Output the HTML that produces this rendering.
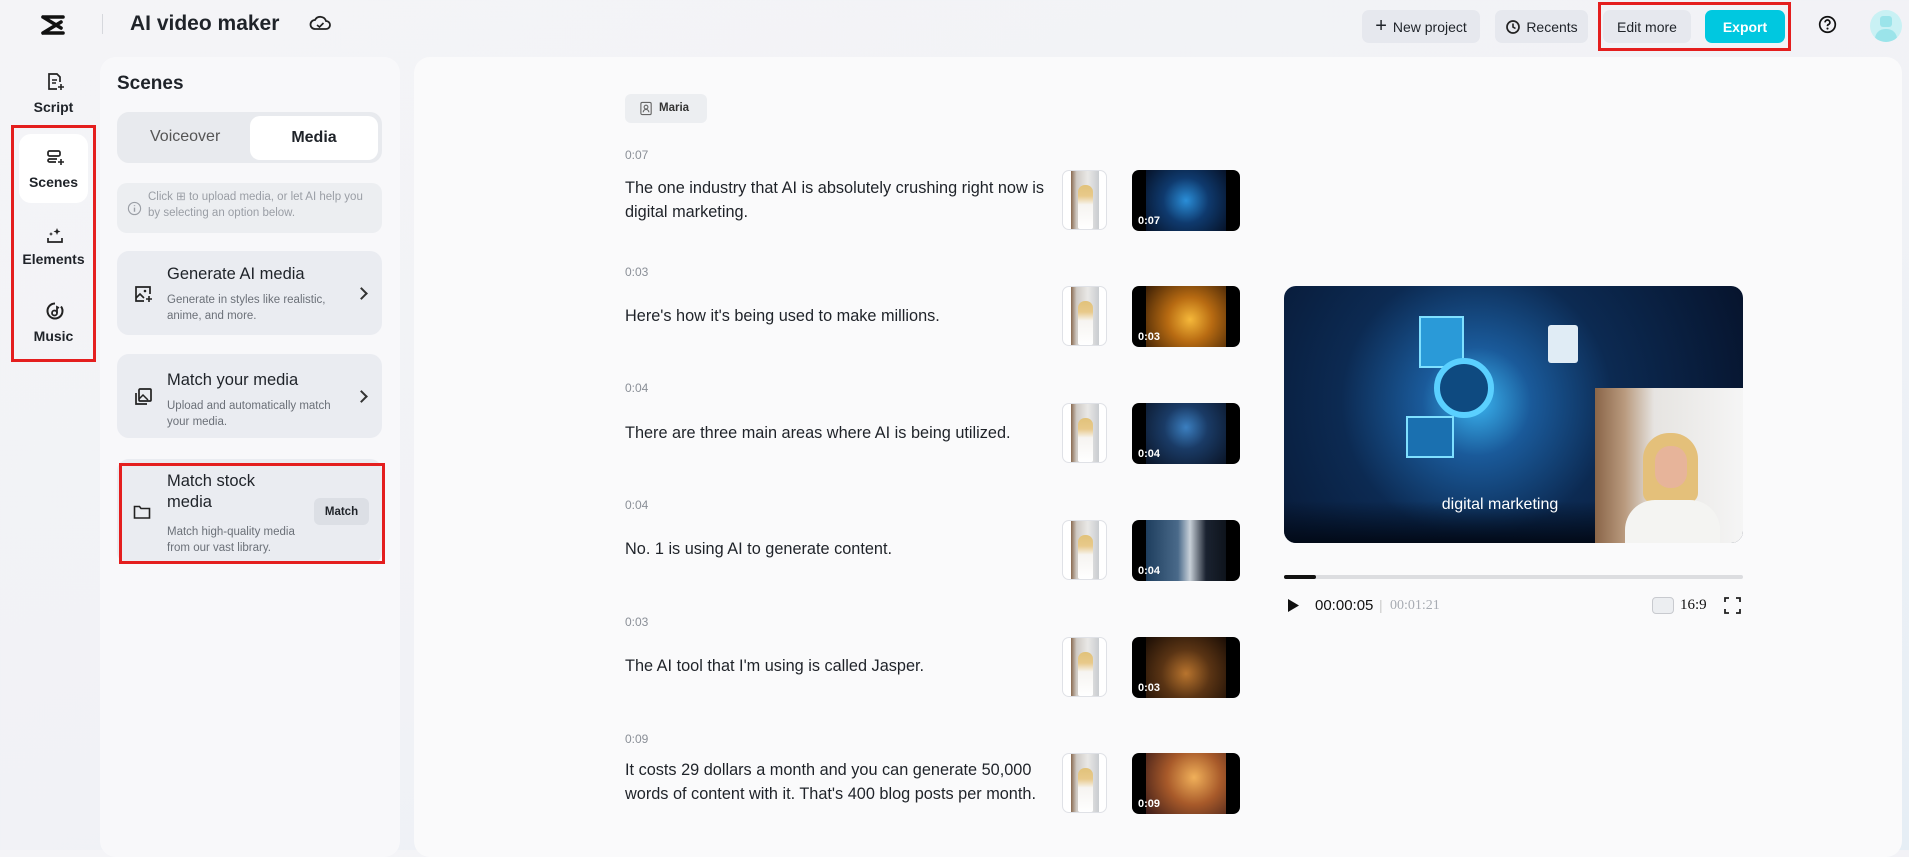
<!DOCTYPE html>
<html><head><meta charset="utf-8"><style>
*{box-sizing:border-box;margin:0;padding:0}
body{width:1909px;height:850px;overflow:hidden;font-family:"Liberation Sans",sans-serif;color:#1f2329;background:linear-gradient(160deg,#f4f4f7 0%,#f1f2f6 55%,#e6eef5 100%);position:relative}
.a{position:absolute}
.btn{position:absolute;top:10px;height:33px;border-radius:7px;background:#e6e8ee;font-size:14px;display:flex;align-items:center;justify-content:center;color:#1f2329}
.rail{position:absolute;left:19px;width:69px;text-align:center;font-size:14px;font-weight:bold}
.card{position:absolute;left:117px;width:265px;background:#eaecf1;border-radius:12px}
.card .t{position:absolute;left:50px;font-size:16.5px;color:#1f2329}
.card .d{position:absolute;left:50px;font-size:11.5px;color:#6b7078;line-height:16px}
.chev{position:absolute;right:16px;width:9px;height:9px;border-right:2px solid #333;border-top:2px solid #333;transform:rotate(45deg)}
.lbl{position:absolute;left:625px;font-size:12px;color:#8a8f97}
.txt{position:absolute;left:625px;font-size:16.3px;line-height:24px;color:#1f2329;width:440px}
.av{position:absolute;left:1062px;width:45px;height:60px;border:1px solid #dfe1e6;border-radius:7px;background:#fff;overflow:hidden}
.av i{position:absolute;left:8px;top:0;width:28px;height:58px;background:linear-gradient(90deg,#8a6a50 0,#cfcac4 20%,#e9e8e6 60%,#c9ccd0 100%)}
.av b{position:absolute;left:15px;top:14px;width:15px;height:44px;border-radius:7px 7px 2px 2px;background:linear-gradient(#e1c27a 0,#e8c98a 25%,#f6f4f1 45%,#fff 100%)}
.vt{position:absolute;left:1132px;width:108px;height:61px;border-radius:7px;background:#000;overflow:hidden}
.vt i{position:absolute;left:14px;top:0;width:80px;height:61px}
.vt span{position:absolute;left:6px;bottom:4px;color:#fff;font-size:11px;font-weight:bold}
</style></head><body>
<!-- header -->
<svg class="a" style="left:39px;top:14px" width="28" height="22" viewBox="0 0 28 22"><path d="M4 3h20M4 19h20M4 3L22 14M4 19L22 8" stroke="#111" stroke-width="3.6" fill="none" stroke-linecap="round"/></svg>
<div class="a" style="left:102px;top:14px;width:1px;height:20px;background:#d6d8dd"></div>
<div class="a" style="left:130px;top:12px;font-size:21px;font-weight:bold">AI video maker</div>
<svg class="a" style="left:309px;top:14px" width="22" height="18" viewBox="0 0 22 18"><path d="M6 15h11a4 4 0 0 0 0-8 6 6 0 0 0-11-1 4.5 4.5 0 0 0 0 9z" fill="none" stroke="#222" stroke-width="1.8"/><path d="M8 11l2.5 2 4-4" fill="none" stroke="#222" stroke-width="1.6"/></svg>
<div class="btn" style="left:1362px;width:118px"><span style="font-size:20px;margin-right:6px;font-weight:300">+</span>New project</div>
<div class="btn" style="left:1495px;width:93px"><svg width="16" height="16" viewBox="0 0 16 16" style="margin-right:5px"><circle cx="8" cy="8" r="6" fill="none" stroke="#222" stroke-width="1.7"/><path d="M8 4.5V8l2.5 1.5" stroke="#222" stroke-width="1.6" fill="none"/></svg>Recents</div>
<div class="a" style="left:1598px;top:2px;width:193px;height:49px;border:3px solid #e41e1e"></div>
<div class="btn" style="left:1603px;width:88px">Edit more</div>
<div class="btn" style="left:1705px;width:80px;background:#00c8e0;color:#fff;font-weight:bold">Export</div>
<svg class="a" style="left:1818px;top:15px" width="19" height="19" viewBox="0 0 20 20"><circle cx="10" cy="10" r="8.2" fill="none" stroke="#111" stroke-width="1.8"/><path d="M7.5 7.8a2.5 2.5 0 1 1 3.4 2.3c-.7.3-.9.8-.9 1.6" fill="none" stroke="#111" stroke-width="1.8"/><circle cx="10" cy="14.3" r="1.1" fill="#111"/></svg>
<div class="a" style="left:1870px;top:10px;width:32px;height:32px;border-radius:50%;background:#c9f1f4;overflow:hidden"><div class="a" style="left:10px;top:6px;width:12px;height:11px;border-radius:3px;background:#9be4ea"></div><div class="a" style="left:5px;top:19px;width:22px;height:16px;border-radius:10px 10px 0 0;background:#9be4ea"></div></div>
<!-- rail -->
<svg class="a" style="left:45px;top:72px" width="20" height="20" viewBox="0 0 20 20"><path d="M12 17H4V2h8l3 3v5" fill="none" stroke="#222" stroke-width="1.7"/><path d="M7 8h5M7 11h4" stroke="#222" stroke-width="1.6"/><path d="M16 12v6M13 15h6" stroke="#222" stroke-width="1.6"/></svg>
<div class="rail" style="top:99px">Script</div>
<div class="a" style="left:11px;top:125px;width:85px;height:237px;border:3px solid #e41e1e"></div>
<div class="a" style="left:19px;top:134px;width:69px;height:69px;background:#fff;border-radius:12px"></div>
<svg class="a" style="left:45px;top:148px" width="20" height="20" viewBox="0 0 20 20"><rect x="3" y="3" width="12" height="5" rx="1.5" fill="none" stroke="#222" stroke-width="1.7"/><path d="M11 14H4.5A1.5 1.5 0 0 1 3 12.5v0A1.5 1.5 0 0 1 4.5 11H12" fill="none" stroke="#222" stroke-width="1.7"/><path d="M16 11v6M13 14h6" stroke="#222" stroke-width="1.6"/></svg>
<div class="rail" style="top:174px">Scenes</div>
<svg class="a" style="left:45px;top:226px" width="20" height="20" viewBox="0 0 20 20"><path d="M3 12v4h14v-4" fill="none" stroke="#222" stroke-width="1.7"/><path d="M12 2l1 2.5 2.5 1-2.5 1-1 2.5-1-2.5L8.5 5.5 11 4.5zM6 6l.6 1.4L8 8l-1.4.6L6 10l-.6-1.4L4 8l1.4-.6z" fill="#222"/></svg>
<div class="rail" style="top:251px">Elements</div>
<svg class="a" style="left:45px;top:301px" width="20" height="20" viewBox="0 0 20 20"><path d="M10 2.5a7.5 7.5 0 1 0 6 3" fill="none" stroke="#222" stroke-width="2"/><circle cx="9.5" cy="12" r="2.5" fill="none" stroke="#222" stroke-width="1.8"/><path d="M12 12V6l2 1" fill="none" stroke="#222" stroke-width="1.8"/></svg>
<div class="rail" style="top:328px">Music</div>
<!-- left panel -->
<div class="a" style="left:100px;top:57px;width:300px;height:800px;background:#f8f8fa;border-radius:16px"></div>
<div class="a" style="left:117px;top:73px;font-size:19px;font-weight:bold;color:#1f2329">Scenes</div>
<div class="a" style="left:117px;top:112px;width:265px;height:51px;background:#e8eaee;border-radius:12px"></div>
<div class="a" style="left:150px;top:128px;font-size:16px;color:#555">Voiceover</div>
<div class="a" style="left:250px;top:116px;width:128px;height:44px;background:#fff;border-radius:10px;font-size:16px;font-weight:bold;display:flex;align-items:center;justify-content:center">Media</div>
<div class="a" style="left:117px;top:183px;width:265px;height:50px;background:#eceef1;border-radius:10px"></div>
<svg class="a" style="left:127px;top:201px" width="15" height="15" viewBox="0 0 16 16"><circle cx="8" cy="8" r="6.5" fill="none" stroke="#9a9ea5" stroke-width="1.2"/><path d="M8 7v4.5M8 4.5v1" stroke="#9a9ea5" stroke-width="1.5"/></svg>
<div class="a" style="left:148px;top:189px;font-size:11.5px;line-height:16px;color:#9a9ea5;width:230px">Click ⊞ to upload media, or let AI help you by selecting an option below.</div>
<div class="card" style="top:251px;height:84px"><svg class="a" style="left:16px;top:33px" width="20" height="20" viewBox="0 0 20 20"><path d="M11 17H3V3h14v7" fill="none" stroke="#222" stroke-width="1.7"/><path d="M3 14l4-4 4 4" fill="none" stroke="#222" stroke-width="1.6"/><circle cx="12" cy="7" r="1.3" fill="#222"/><path d="M16 12v6M13 15h6" stroke="#222" stroke-width="1.6"/></svg><div class="t" style="top:14px">Generate AI media</div><div class="d" style="top:41px">Generate in styles like realistic,<br>anime, and more.</div><div class="chev" style="top:38px"></div></div>
<div class="card" style="top:354px;height:84px"><svg class="a" style="left:16px;top:33px" width="20" height="20" viewBox="0 0 20 20"><rect x="6" y="2" width="12" height="12" rx="1" fill="none" stroke="#222" stroke-width="1.7"/><path d="M3 6v11h11" fill="none" stroke="#222" stroke-width="1.7"/><path d="M6 12l4-4 5 5" fill="none" stroke="#222" stroke-width="1.5"/></svg><div class="t" style="top:17px">Match your media</div><div class="d" style="top:44px">Upload and automatically match<br>your media.</div><div class="chev" style="top:38px"></div></div>
<div class="card" style="top:459px;height:105px"><svg class="a" style="left:16px;top:45px" width="18" height="16" viewBox="0 0 18 16"><path d="M1.5 2.5h5l1.5 2h8.5v9.5h-15z" fill="none" stroke="#222" stroke-width="1.6"/></svg><div class="t" style="top:12px;line-height:21px">Match stock<br>media</div><div class="d" style="top:65px">Match high-quality media<br>from our vast library.</div><div class="a" style="left:197px;top:39px;width:55px;height:27px;background:#dcdfe5;border-radius:6px;font-size:11.5px;font-weight:bold;display:flex;align-items:center;justify-content:center">Match</div></div>
<div class="a" style="left:119px;top:463px;width:266px;height:101px;border:3px solid #e41e1e"></div>
<!-- main -->
<div class="a" style="left:414px;top:57px;width:1488px;height:800px;background:#fafafb;border-radius:16px"></div>
<div class="a" style="left:625px;top:94px;width:82px;height:29px;background:#eceef1;border-radius:6px"></div>
<svg class="a" style="left:639px;top:101px" width="15" height="15" viewBox="0 0 16 16"><rect x="2" y="1.5" width="11" height="13" rx="1.5" fill="none" stroke="#666" stroke-width="1.2"/><circle cx="7.5" cy="6.5" r="2" fill="none" stroke="#666" stroke-width="1.2"/><path d="M4.5 12a3 3 0 0 1 6 0" fill="none" stroke="#666" stroke-width="1.2"/></svg>
<div class="a" style="left:659px;top:102px;font-size:11.5px;font-weight:bold;color:#333">Maria</div>

<div class="lbl" style="top:148px">0:07</div>
<div class="txt" style="top:176px">The one industry that AI is absolutely crushing right now is digital marketing.</div>
<div class="av" style="top:170px"><i></i><b></b></div>
<div class="vt" style="top:170px"><i style="background:radial-gradient(circle at 50% 50%,#2a8ed8 0,#0f3a6e 45%,#061228 100%)"></i><span>0:07</span></div>

<div class="lbl" style="top:265px">0:03</div>
<div class="txt" style="top:304px">Here's how it's being used to make millions.</div>
<div class="av" style="top:286px"><i></i><b></b></div>
<div class="vt" style="top:286px"><i style="background:radial-gradient(circle at 55% 55%,#f5b83a 0,#b86b12 40%,#3a1e05 100%)"></i><span>0:03</span></div>

<div class="lbl" style="top:381px">0:04</div>
<div class="txt" style="top:421px">There are three main areas where AI is being utilized.</div>
<div class="av" style="top:403px"><i></i><b></b></div>
<div class="vt" style="top:403px"><i style="background:radial-gradient(circle at 50% 40%,#3b7fc0 0,#1a3b66 40%,#0a1426 100%)"></i><span>0:04</span></div>

<div class="lbl" style="top:498px">0:04</div>
<div class="txt" style="top:537px">No. 1 is using AI to generate content.</div>
<div class="av" style="top:520px"><i></i><b></b></div>
<div class="vt" style="top:520px"><i style="background:linear-gradient(90deg,#1e3e5e 0,#4a6a8a 40%,#c8d0d8 55%,#1a2230 75%,#0e141c 100%)"></i><span>0:04</span></div>

<div class="lbl" style="top:615px">0:03</div>
<div class="txt" style="top:654px">The AI tool that I'm using is called Jasper.</div>
<div class="av" style="top:637px"><i></i><b></b></div>
<div class="vt" style="top:637px"><i style="background:radial-gradient(circle at 50% 60%,#b8742e 0,#5a3414 45%,#1a0d05 100%)"></i><span>0:03</span></div>

<div class="lbl" style="top:732px">0:09</div>
<div class="txt" style="top:758px">It costs 29 dollars a month and you can generate 50,000 words of content with it. That's 400 blog posts per month.</div>
<div class="av" style="top:753px"><i></i><b></b></div>
<div class="vt" style="top:753px"><i style="background:radial-gradient(circle at 60% 40%,#f0b05a 0,#a85a2a 45%,#3a1a18 100%)"></i><span>0:09</span></div>

<!-- preview -->
<div class="a" style="left:1284px;top:286px;width:459px;height:257px;border-radius:12px;overflow:hidden;background:radial-gradient(circle at 42% 45%,#3ab4f0 0,#1a5a9a 18%,#0c2a52 45%,#06122a 100%)">
<div class="a" style="left:135px;top:30px;width:45px;height:52px;border:2px solid #7fe0ff;background:#2a9ad8"></div>
<div class="a" style="left:150px;top:72px;width:60px;height:60px;border-radius:50%;border:6px solid #5ad0ff;background:#0e4a80"></div>
<div class="a" style="left:122px;top:130px;width:48px;height:42px;border:2px solid #7fe0ff;background:#1a70b0"></div>
<div class="a" style="left:264px;top:39px;width:30px;height:38px;background:#e0ecf5;border-radius:3px"></div>
<div class="a" style="left:0;top:215px;width:312px;height:42px;background:linear-gradient(transparent,#020a18)"></div>
<div class="a" style="left:311px;top:102px;width:148px;height:155px;background:linear-gradient(90deg,#8a6548 0,#b99a7e 20%,#e6e4e1 40%,#f5f5f5 100%)"><div class="a" style="left:48px;top:45px;width:55px;height:70px;border-radius:26px 26px 10px 10px;background:#e4c07a"></div><div class="a" style="left:60px;top:58px;width:32px;height:42px;border-radius:15px;background:#e7b49a"></div><div class="a" style="left:30px;top:112px;width:95px;height:45px;border-radius:30px 30px 0 0;background:#f4f4f2"></div></div>
<div class="a" style="left:136px;top:210px;width:160px;text-align:center;color:#fff;font-size:16px">digital marketing</div>
</div>
<div class="a" style="left:1284px;top:575px;width:459px;height:4px;background:#dcdde0;border-radius:2px"></div>
<div class="a" style="left:1284px;top:575px;width:32px;height:4px;background:#111;border-radius:2px"></div>
<svg class="a" style="left:1287px;top:598px" width="13" height="15" viewBox="0 0 13 15"><path d="M1 1l11 6.5L1 14z" fill="#111"/></svg>
<div class="a" style="left:1315px;top:597px;font-size:15px;color:#111">00:00:05</div>
<div class="a" style="left:1379px;top:597px;font-size:14px;color:#ccc">|</div>
<div class="a" style="left:1390px;top:598px;font-size:14px;color:#a8acb3;font-family:'Liberation Serif',serif">00:01:21</div>
<div class="a" style="left:1652px;top:597px;width:22px;height:17px;border:1px solid #c8cacf;border-radius:4px;background:#eceef1"></div>
<div class="a" style="left:1680px;top:597px;font-size:15px;color:#111;font-family:'Liberation Serif',serif">16:9</div>
<svg class="a" style="left:1724px;top:597px" width="17" height="17" viewBox="0 0 17 17"><path d="M1 5V1h4M12 1h4v4M16 12v4h-4M5 16H1v-4" fill="none" stroke="#222" stroke-width="1.8"/></svg>
</body></html>
